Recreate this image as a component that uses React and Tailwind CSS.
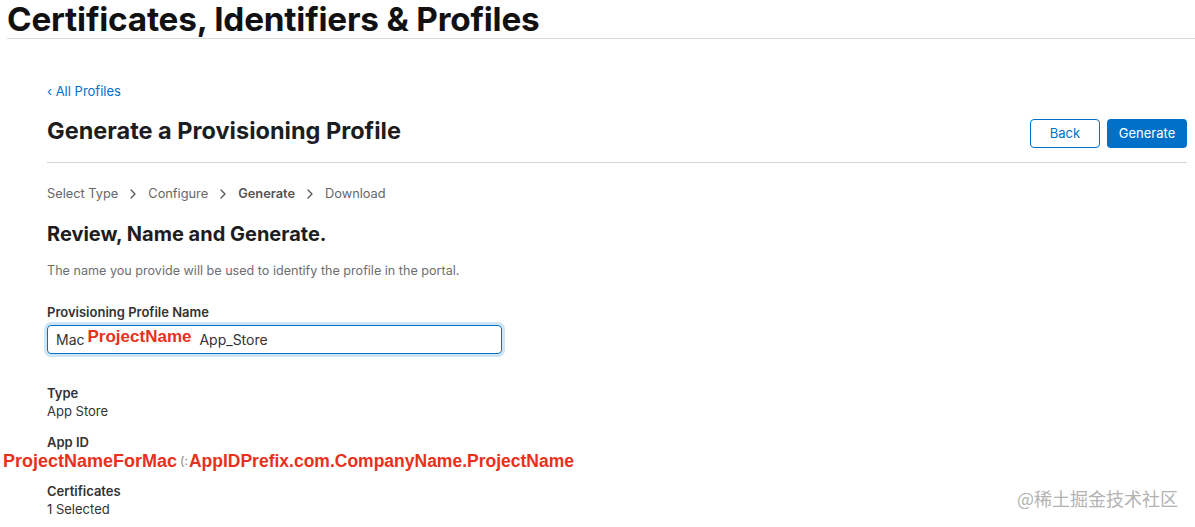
import React from "react";

function Chevron() {
  return (
    <svg width="6" height="10" viewBox="0 0 6 10" className="mx-[12px] inline-block" fill="none">
      <path d="M1 1l4 4-4 4" stroke="#555" strokeWidth="1.3" strokeLinecap="round" strokeLinejoin="round" />
    </svg>
  );
}

export default function App() {
  const red = "font-['Liberation_Sans',Arial,sans-serif] font-bold text-[#e8311c]";
  return (
    <div className="relative w-[1195px] h-[527px] overflow-hidden bg-white font-['Inter',sans-serif] text-[#333]">
      <div className="ml-[7px] h-[39px] border-b border-[#d9d9d9]">
        <h1 className="text-[33.3px] leading-[38px] font-bold text-[#111] tracking-[-0.2px]">
          Certificates, Identifiers &amp; Profiles
        </h1>
      </div>

      <div className="pl-[47px] pr-[8px]">
        <div className="mt-[45px] text-[13px] leading-[14px] text-[#0070c9]">
          ‹ All Profiles
        </div>

        <div className="mt-[17px] pb-[14px] border-b border-[#d6d6d6] flex items-start justify-between">
          <h2 className="text-[23.5px] leading-[32px] font-bold text-[#1d1d1f]">Generate a Provisioning Profile</h2>
          <div className="mt-[4px] flex gap-[7px]">
            <button className="w-[70px] h-[29px] rounded-[4px] border border-[#0070c9] text-[13px] text-[#0070c9] bg-white">
              Back
            </button>
            <button className="w-[80px] h-[29px] rounded-[4px] bg-[#0070c9] text-[13px] text-white">
              Generate
            </button>
          </div>
        </div>

        <div className="mt-[23px] flex items-center text-[12.8px] leading-[16px] text-[#666]">
          <span>Select Type</span>
          <Chevron />
          <span>Configure</span>
          <Chevron />
          <span className="font-semibold text-[#555]">Generate</span>
          <Chevron />
          <span>Download</span>
        </div>

        <h3 className="mt-[20px] text-[20px] leading-[24px] font-bold text-[#1d1d1f]">Review, Name and Generate.</h3>

        <p className="mt-[17px] text-[12.6px] leading-[16px] text-[#6e6e73]">
          The name you provide will be used to identify the profile in the portal.
        </p>

        <div className="mt-[25px] text-[13px] leading-[16px] font-semibold text-[#333]">Provisioning Profile Name</div>

        <div className="mt-[5px] w-[455px] h-[29px] rounded-[4px] border border-[#0070c9] ring-[3px] ring-[#cfe4f7] flex items-center pl-[8px] text-[14px] text-[#333]">
          <span>Mac</span>
          <span className={`ml-[3px] relative top-[-3px] text-[17px] leading-[20px] ${red}`}>ProjectName</span>
          <span className="ml-[8px]">App_Store</span>
        </div>

        <div className="mt-[30px] text-[13px] leading-[18px] font-semibold">Type</div>
        <div className="text-[13px] leading-[18px]">App Store</div>

        <div className="mt-[13px] text-[13px] leading-[18px] font-semibold">App ID</div>
        <div className="ml-[-44px] h-[20px] flex items-center">
          <span className={`text-[18px] leading-[20px] ${red}`}>ProjectNameForMac</span>
          <span className="ml-[3px] text-[12px] text-[#888]">(:</span>
          <span className={`ml-[1px] text-[17.5px] leading-[20px] ${red}`}>AppIDPrefix.com.CompanyName.ProjectName</span>
        </div>

        <div className="mt-[11px] text-[13px] leading-[18px] font-semibold">Certificates</div>
        <div className="text-[13px] leading-[18px]">1 Selected</div>
      </div>

      <div className="absolute right-[17px] top-[487px] text-[18px] leading-[22px] text-[#b3b3b3] font-['Noto_Sans_CJK_SC',sans-serif]">
        @稀土掘金技术社区
      </div>
    </div>
  );
}
